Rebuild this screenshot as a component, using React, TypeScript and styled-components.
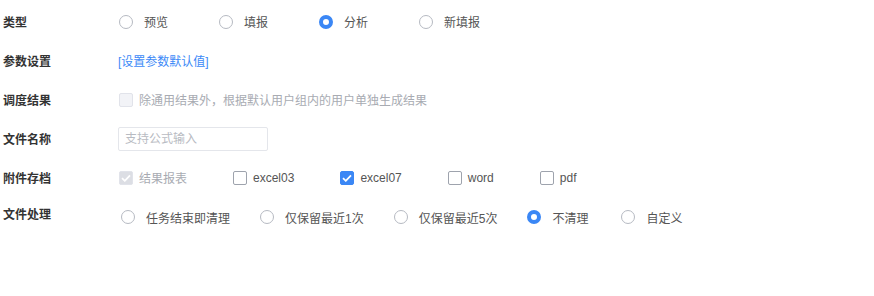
import styled, { createGlobalStyle } from "styled-components";

const GlobalStyle = createGlobalStyle`
  body {
    margin: 0;
    background: #fff;
    font-family: "Liberation Sans", "Noto Sans CJK SC", sans-serif;
    font-size: 12px;
    color: #333;
  }
`;

const Form = styled.div`
  padding: 2px 0 0 3px;
`;

const Row = styled.div<{ $height?: number }>`
  display: flex;
  align-items: center;
  height: ${(p) => p.$height ?? 39}px;
`;

const Label = styled.div`
  width: 115px;
  flex-shrink: 0;
  font-weight: bold;
  color: #333;
`;

const Field = styled.div<{ $indent?: number; $drop?: number }>`
  display: flex;
  align-items: center;
  padding-left: ${(p) => p.$indent ?? 0}px;
  margin-top: ${(p) => p.$drop ?? 0}px;
`;

const Option = styled.label<{ $width?: number; $gap?: number }>`
  display: flex;
  align-items: center;
  ${(p) => (p.$width ? `width: ${p.$width}px;` : "")}
  margin-right: ${(p) => p.$gap ?? 0}px;
  color: #555;
  cursor: pointer;
`;

const Radio = styled.span<{ $checked?: boolean }>`
  box-sizing: border-box;
  width: 14px;
  height: 14px;
  border-radius: 50%;
  background: #fff;
  border: ${(p) => (p.$checked ? "4px solid #3b87f5" : "1px solid #b6bac2")};
  margin-right: 11px;
  flex-shrink: 0;
`;

const Box = styled.span<{ $checked?: boolean; $disabled?: boolean }>`
  box-sizing: border-box;
  width: 14px;
  height: 14px;
  border-radius: 2px;
  display: flex;
  align-items: center;
  justify-content: center;
  margin-right: 6px;
  flex-shrink: 0;
  border: 1px solid
    ${(p) =>
      p.$disabled ? "#e1e3ea" : p.$checked ? "#3b87f5" : "#9ea3ad"};
  background: ${(p) =>
    p.$disabled ? (p.$checked ? "#dcdee4" : "#f2f3f7") : p.$checked ? "#3b87f5" : "#fff"};
`;

const OptionText = styled.span<{ $muted?: boolean }>`
  color: ${(p) => (p.$muted ? "#a8abb2" : "#555")};
  white-space: nowrap;
`;

const Link = styled.a`
  color: #3d8af7;
  text-decoration: none;
  cursor: pointer;
`;

const Input = styled.input`
  box-sizing: border-box;
  width: 150px;
  height: 24px;
  border: 1px solid #e4e6eb;
  border-radius: 2px;
  padding: 0 6px;
  font: inherit;
  color: #333;
  outline: none;
  &::placeholder {
    color: #b8bbc2;
  }
`;

const Check = () => (
  <svg width="10" height="8" viewBox="0 0 10 8">
    <path d="M1 4.2 L3.8 6.8 L9 1.4" fill="none" stroke="#fff" strokeWidth="1.8" />
  </svg>
);

const types = ["预览", "填报", "分析", "新填报"];
const files = [
  { name: "结果报表", checked: true, disabled: true },
  { name: "excel03" },
  { name: "excel07", checked: true },
  { name: "word" },
  { name: "pdf" },
];
const cleanups = ["任务结束即清理", "仅保留最近1次", "仅保留最近5次", "不清理", "自定义"];

export default function App() {
  return (
    <>
      <GlobalStyle />
      <Form>
        <Row>
          <Label>类型</Label>
          <Field $indent={1}>
            {types.map((t) => (
              <Option key={t} $width={100}>
                <Radio $checked={t === "分析"} />
                <OptionText>{t}</OptionText>
              </Option>
            ))}
          </Field>
        </Row>
        <Row>
          <Label>参数设置</Label>
          <Link>[设置参数默认值]</Link>
        </Row>
        <Row>
          <Label>调度结果</Label>
          <Field $indent={1}>
            <Option>
              <Box $disabled />
              <OptionText $muted>除通用结果外，根据默认用户组内的用户单独生成结果</OptionText>
            </Option>
          </Field>
        </Row>
        <Row>
          <Label>文件名称</Label>
          <Input placeholder="支持公式输入" />
        </Row>
        <Row>
          <Label>附件存档</Label>
          <Field $indent={1}>
            {files.map((f) => (
              <Option key={f.name} $gap={46}>
                <Box $checked={f.checked} $disabled={f.disabled}>
                  {f.checked && <Check />}
                </Box>
                <OptionText $muted={f.disabled}>{f.name}</OptionText>
              </Option>
            ))}
          </Field>
        </Row>
        <Row $height={33}>
          <Label>文件处理</Label>
          <Field $indent={3} $drop={7}>
            {cleanups.map((c) => (
              <Option key={c} $gap={c === "不清理" ? 33 : 30}>
                <Radio $checked={c === "不清理"} />
                <OptionText>{c}</OptionText>
              </Option>
            ))}
          </Field>
        </Row>
      </Form>
    </>
  );
}
